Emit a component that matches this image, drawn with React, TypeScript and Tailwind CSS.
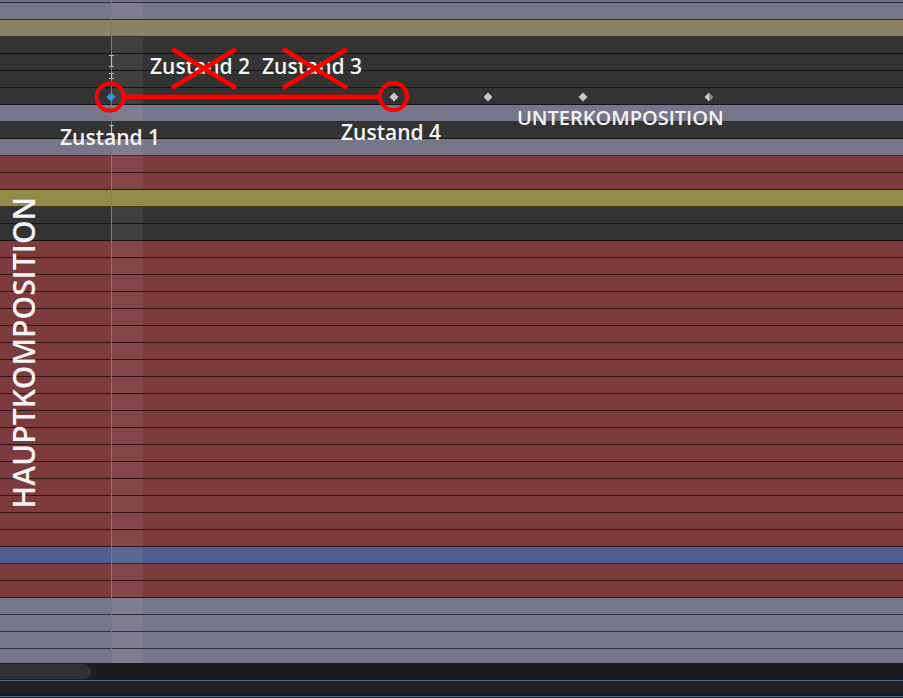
import React from 'react';

type Kind = 'gray' | 'tan' | 'dark' | 'red' | 'olive' | 'blue';

const bg: Record<Kind, string> = {
  gray: 'bg-[#76768a]',
  tan: 'bg-[#8d8164]',
  dark: 'bg-[#333333]',
  red: 'bg-[#7d3b3e]',
  olive: 'bg-[#928c4b]',
  blue: 'bg-[#525e93]',
};

// layer rows, top to bottom (each 17px incl. separator)
const rows: { k: Kind; hl: boolean }[] = [
  { k: 'gray', hl: true },
  { k: 'tan', hl: false },
  { k: 'dark', hl: true },
  { k: 'dark', hl: true },
  { k: 'dark', hl: true },
  { k: 'dark', hl: true },
  { k: 'gray', hl: true },
  { k: 'dark', hl: false },
  { k: 'gray', hl: true },
  { k: 'red', hl: true },
  { k: 'red', hl: true },
  { k: 'olive', hl: false },
  { k: 'dark', hl: true },
  { k: 'dark', hl: true },
  ...Array.from({ length: 18 }, () => ({ k: 'red' as Kind, hl: true })),
  { k: 'blue', hl: true },
  { k: 'red', hl: true },
  { k: 'red', hl: true },
  { k: 'gray', hl: true },
  { k: 'gray', hl: true },
  { k: 'gray', hl: true },
];

const Row = ({ k, hl, last }: { k: Kind; hl: boolean; last?: boolean }) => (
  <div className={`flex box-border ${last ? 'h-[14px]' : 'h-[17px] border-b border-black/60'} ${bg[k]}`}>
    <div className="w-[112px] shrink-0" />
    <div className={`w-[31px] shrink-0 ${hl ? 'bg-white/[0.06]' : ''}`} />
    <div className="flex-1" />
  </div>
);

const Diamond = ({ x, split }: { x: number; split?: boolean }) => (
  <svg className="absolute top-[92px]" style={{ left: x - 5 }} width="10" height="10" viewBox="0 0 10 10">
    {split ? (
      <>
        <polygon points="5,0.5 5,9.5 0.5,5" fill="#cfcfcf" />
        <polygon points="5,0.5 9.5,5 5,9.5" fill="#8a8a8a" />
      </>
    ) : (
      <polygon points="5,0.5 9.5,5 5,9.5 0.5,5" fill="#c8c8c8" />
    )}
  </svg>
);

const Marker = ({ top, h }: { top: number; h: number }) => (
  <svg className="absolute left-[108px]" style={{ top }} width="7" height={h} viewBox={`0 0 7 ${h}`}>
    <path d={`M1 0.5H6M3.5 0.5V${h - 0.5}M1 ${h - 0.5}H6`} stroke="#b4bccb" strokeWidth="1.2" fill="none" />
  </svg>
);

const label = "absolute font-['Open_Sans',sans-serif] font-semibold text-[#f4f4f4] whitespace-nowrap leading-none";

export default function App() {
  return (
    <div className="w-[903px] h-[698px] overflow-hidden bg-[#1d1d1d] relative">
      <div className="flex flex-col">
        {/* partial row above */}
        <div className="h-[3px] box-border border-b border-black/60 bg-[#72728a]" />
        {rows.map((r, i) => (
          <Row key={i} k={r.k} hl={r.hl} />
        ))}
        <Row k="gray" hl={true} last />

        {/* scroll bar */}
        <div className="h-[17px] bg-[#1d1d1d] flex items-center">
          <div className="w-[91px] h-[15px] rounded-r-full bg-[#313131]" />
        </div>
        <div className="h-px bg-[#3f6e9c]" />
        <div className="h-[12px] bg-[#212121]" />
        <div className="h-[3px] bg-[#1a1a1a]" />
        <div className="h-px bg-[#3f6e9c]" />
        <div className="flex-1 bg-[#161616]" />
      </div>

      {/* playhead */}
      <div className="absolute left-[111px] top-0 w-px h-[663px] bg-[#3b86e4]" />
      <Marker top={55} h={12} />
      <Marker top={73} h={6} />
      <Marker top={125} h={9} />

      {/* keyframes */}
      <svg className="absolute left-[106px] top-[92px]" width="10" height="10" viewBox="0 0 10 10">
        <polygon points="5,0.5 9.5,5 5,9.5 0.5,5" fill="#3a8fe6" />
      </svg>
      <Diamond x={394} />
      <Diamond x={488} />
      <Diamond x={583} />
      <Diamond x={709} split />

      {/* annotations */}
      <svg className="absolute left-0 top-0" width="903" height="160" viewBox="0 0 903 160">
        <circle cx="110" cy="97" r="13.5" stroke="#ff0000" strokeWidth="4" fill="none" />
        <circle cx="393.5" cy="96.5" r="13.5" stroke="#ff0000" strokeWidth="4" fill="none" />
        <line x1="124" y1="96.7" x2="380" y2="96.7" stroke="#ff0000" strokeWidth="4.5" />
      </svg>

      <div className={`${label} left-[150px] top-[56px] text-[21px]`}>Zustand 2</div>
      <div className={`${label} left-[262px] top-[56px] text-[21px]`}>Zustand 3</div>
      <div className={`${label} left-[60px] top-[127px] text-[21px]`}>Zustand 1</div>
      <div className={`${label} left-[341px] top-[122px] text-[21px]`}>Zustand 4</div>
      <div className={`${label} left-[517px] top-[108px] text-[20px]`}>UNTERKOMPOSITION</div>

      <svg className="absolute left-0 top-0" width="903" height="160" viewBox="0 0 903 160">
        <path d="M172 49L236 88M236 49L172 88" stroke="#ff0000" strokeWidth="4.5" />
        <path d="M283 49L347 88M347 49L283 88" stroke="#ff0000" strokeWidth="4.5" />
      </svg>

      <div className={`${label} left-[9px] top-[197px] text-[30px] font-medium [writing-mode:vertical-rl] rotate-180`}>
        HAUPTKOMPOSITION
      </div>
    </div>
  );
}
